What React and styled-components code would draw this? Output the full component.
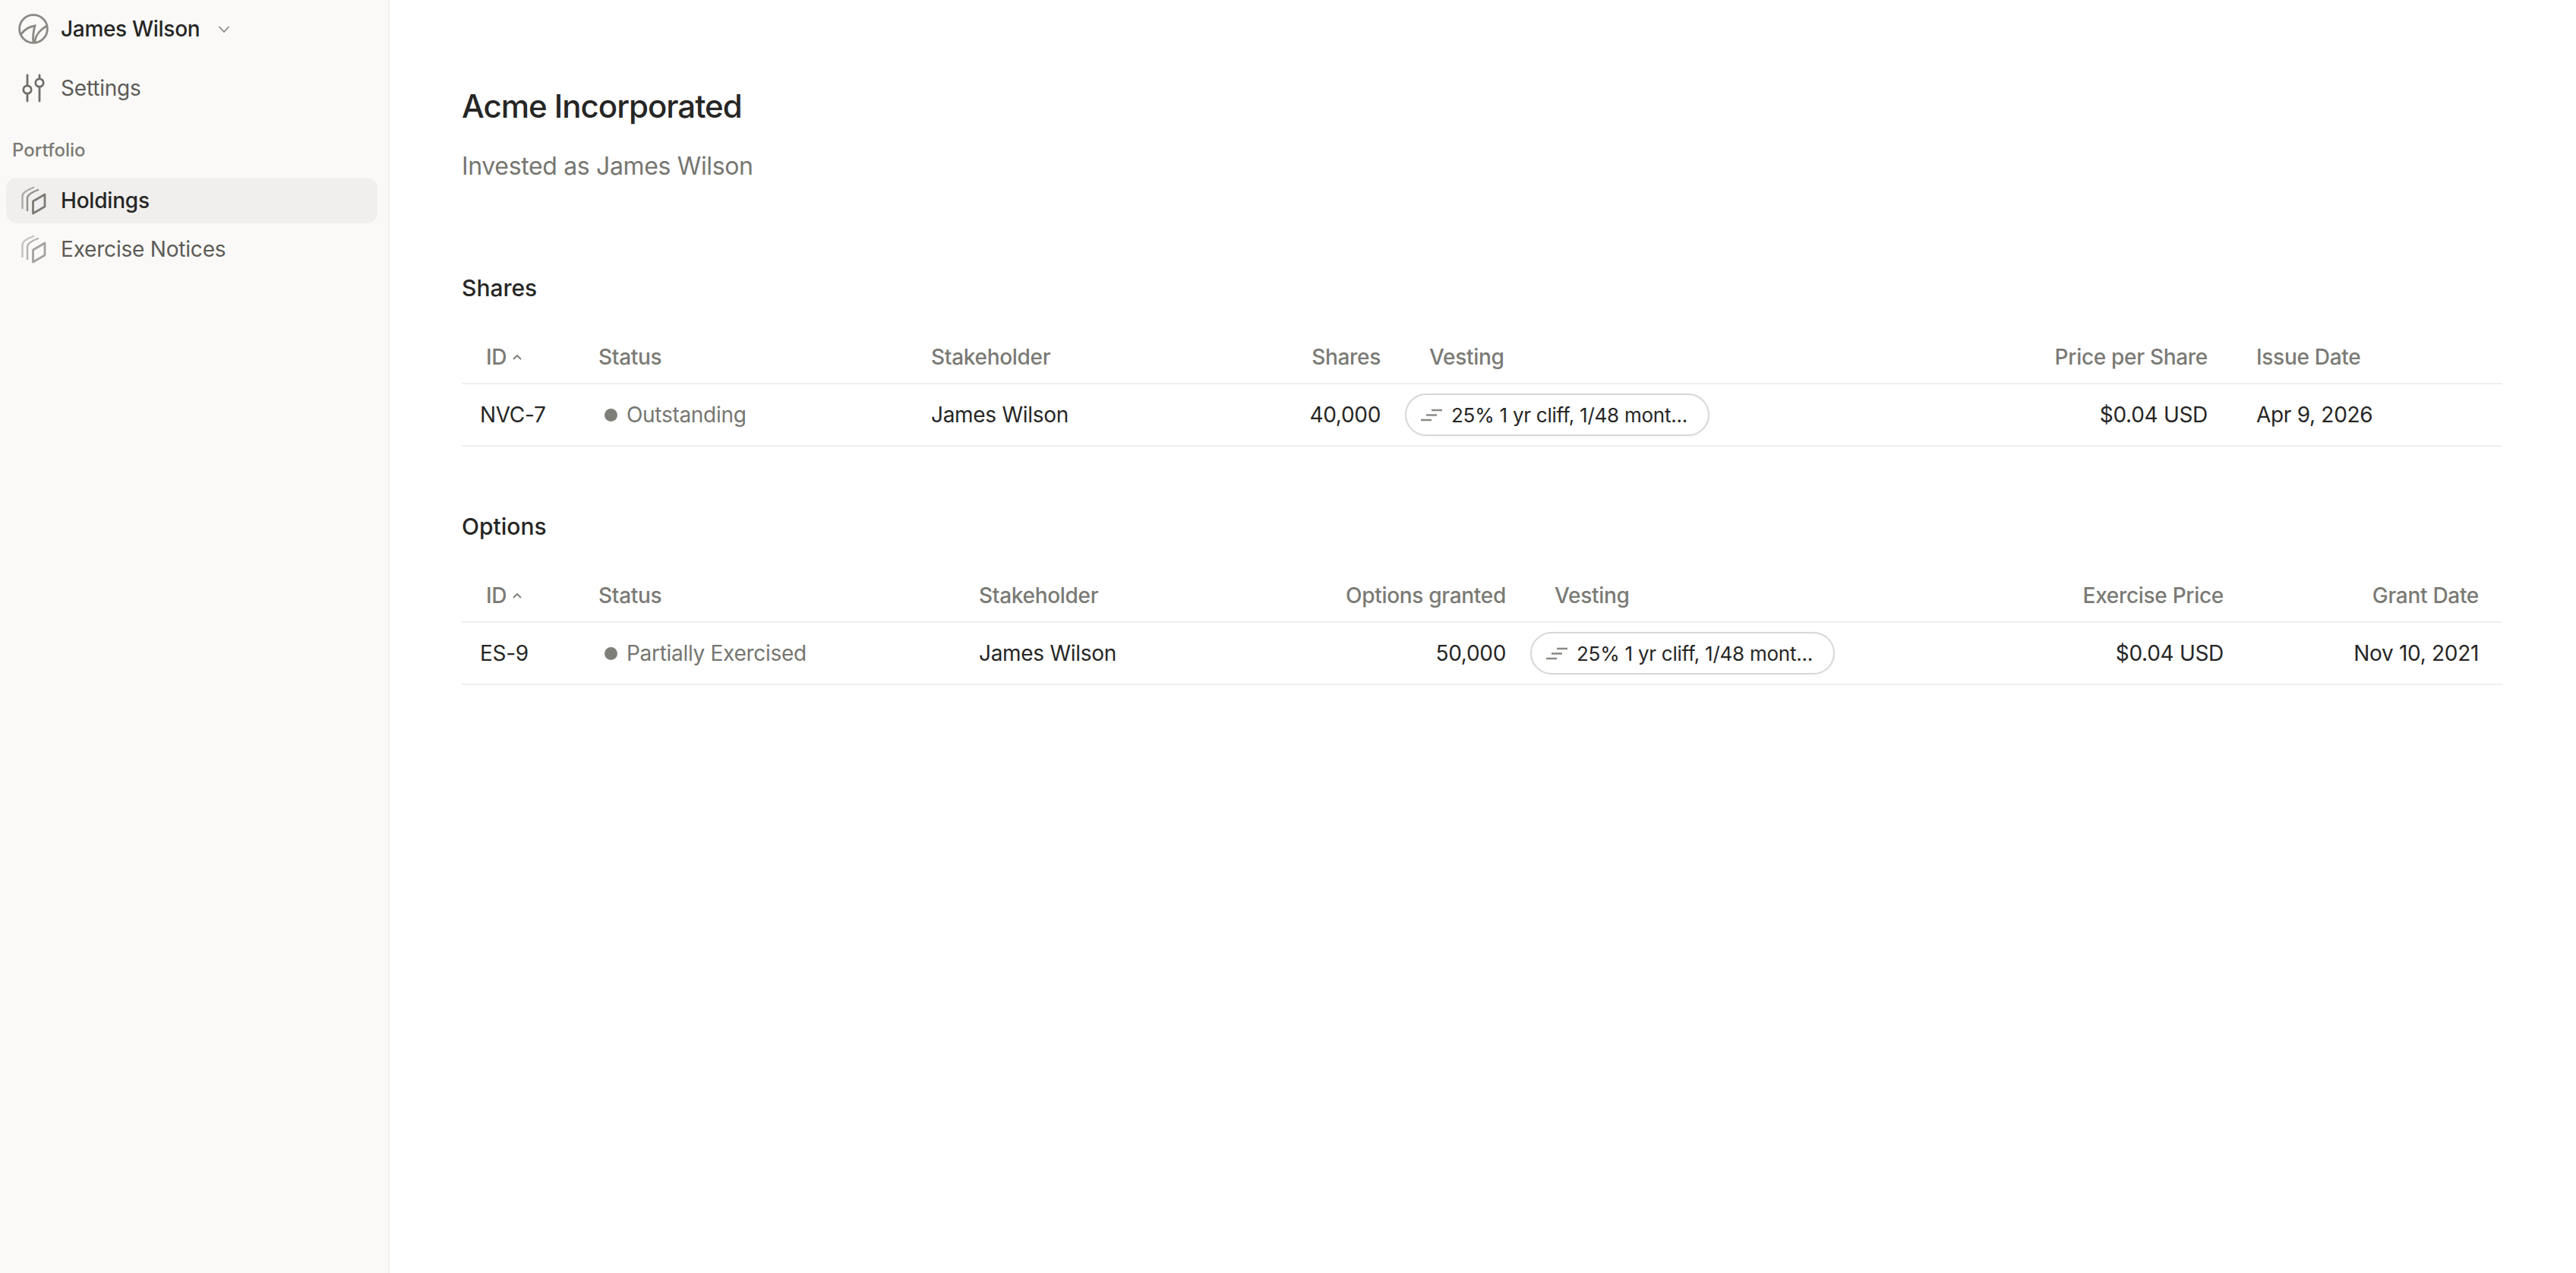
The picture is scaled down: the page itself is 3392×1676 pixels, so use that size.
import styled, { createGlobalStyle } from "styled-components";

const GlobalStyle = createGlobalStyle`
  html, body {
    margin: 0;
    padding: 0;
    background: #fff;
    font-family: Inter, "Liberation Sans", sans-serif;
    color: #262625;
  }
  * { box-sizing: border-box; }
`;

const Page = styled.div`
  display: flex;
  height: 100vh;
  overflow: hidden;
`;
const Sidebar = styled.aside`
  width: 513px;
  flex: none;
  background: #faf9f7;
  border-right: 2px solid #f0efed;
  padding: 0 14px 0 8px;
  display: flex;
  flex-direction: column;
`;
const UserRow = styled.div`
  height: 76px;
  margin-bottom: 10px;
  display: flex;
  align-items: center;
  padding-left: 16px;
  font-size: 28px;
  font-weight: 500;
  letter-spacing: -0.3px;
  color: #262625;
`;
const UserIcon = styled.svg`
  width: 40px;
  height: 40px;
  margin-right: 16px;
  flex: none;
`;
const Chevron = styled.svg`
  width: 16px;
  height: 11px;
  margin-left: 24px;
`;
const NavItem = styled.div`
  height: 60px;
  display: flex;
  align-items: center;
  padding-left: 20px;
  border-radius: 14px;
  font-size: 28px;
  letter-spacing: -0.2px;
  font-weight: ${(props) => (props.$active ? 500 : 400)};
  color: ${(props) => (props.$active ? "#262625" : "#5c5b57")};
  background: ${(props) => (props.$active ? "#f0efed" : "transparent")};
  margin-bottom: 4px;
`;
const NavIcon = styled.svg`
  width: 34px;
  height: 38px;
  margin-right: 18px;
  flex: none;
`;
const SectionLabel = styled.div`
  font-size: 24px;
  font-weight: 500;
  color: #7a7a75;
  line-height: 30px;
  padding-left: 8px;
  margin: 33px 0 21px;
`;
const Main = styled.main`
  flex: 1;
  min-width: 0;
  padding: 112px 97px 0 95px;
`;
const Title = styled.h1`
  margin: 0;
  font-size: 42px;
  line-height: 56px;
  font-weight: 500;
  letter-spacing: -1px;
  color: #262625;
`;
const Subtitle = styled.p`
  margin: 31px 0 0;
  font-size: 32px;
  line-height: 40px;
  letter-spacing: -0.35px;
  color: #767671;
`;
const Section = styled.section`
  margin-top: ${(props) => props.$top}px;
`;
const SectionTitle = styled.h2`
  margin: 0 0 36px;
  font-size: 30px;
  line-height: 40px;
  font-weight: 500;
  color: #262625;
`;
const Row = styled.div`
  display: grid;
  grid-template-columns: ${(props) => props.$cols};
  align-items: center;
  height: ${(props) => props.$height}px;
  border-bottom: 2px solid #f0efed;
`;
const Cell = styled.div`
  display: flex;
  align-items: center;
  min-width: 0;
  font-size: 28px;
  letter-spacing: -0.3px;
  white-space: nowrap;
  justify-content: ${(props) => (props.$right ? "flex-end" : "flex-start")};
  padding-left: ${(props) => props.$pl}px;
  padding-right: ${(props) => props.$pr}px;
  color: ${(props) => (props.$muted ? "#767671" : "#262625")};
`;
const HeadCell = styled(Cell)`
  font-weight: 500;
  color: #7a7a75;
`;
const SortIcon = styled.svg`
  width: 14px;
  height: 8px;
  margin-left: 7px;
`;
const Dot = styled.span`
  width: 17px;
  height: 17px;
  border-radius: 50%;
  background: #7f7f7a;
  margin: 0 12px 0 8px;
  flex: none;
`;
const Pill = styled.div`
  width: 401px;
  height: 56px;
  display: flex;
  align-items: center;
  padding: 0 18px;
  border: 2px solid #d8d7d4;
  border-radius: 28px;
  background: #fff;
  box-shadow: 0 2px 4px rgba(0, 0, 0, 0.03);
  font-size: 26px;
  letter-spacing: -0.25px;
  color: #262625;
`;
const PillIcon = styled.svg`
  width: 30px;
  height: 18px;
  margin-right: 11px;
  flex: none;
`;

const LogoIcon = () => (
  <UserIcon viewBox="0 0 40 40" fill="none" stroke="#8b8a85" strokeWidth="2.8">
    <circle cx="20" cy="20" r="18.4" />
    <path d="M3 28C7 22 14 17 22 16C20 23 19 31 20 38" />
    <path d="M22 38C22 29 29 21 38 16" />
  </UserIcon>
);

const SlidersIcon = () => (
  <NavIcon viewBox="0 0 34 38" fill="none" stroke="#6f6e69" strokeWidth="2.8" strokeLinecap="round">
    <path d="M8 2V15M8 27V36M24 2V6M24 18V36" />
    <circle cx="8" cy="21" r="5.200" />
    <circle cx="24" cy="12" r="5.200" />
  </NavIcon>
);

const StackIcon = ({ light }) => (
  <NavIcon viewBox="0 0 34 38" fill="none" strokeWidth="2.4" strokeLinecap="round" strokeLinejoin="round">
    <path d="M1.500 29V13C1.500 9 8 5 16 2" stroke={light ? "#c2c1bd" : "#a9a8a4"} />
    <path d="M8 32V16C8 12 14 8 22 5" stroke={light ? "#b4b3af" : "#908f8a"} />
    <path d="M15.500 20L31 11V27L15.500 36Z" stroke={light ? "#a3a29e" : "#7c7b76"} strokeWidth="2.800" />
  </NavIcon>
);

const VestIcon = () => (
  <PillIcon viewBox="0 0 30 18" fill="none" stroke="#8b8a85" strokeWidth="2.600">
    <path d="M1 16H15M8 9.500H22M15 3H29" />
  </PillIcon>
);

const SortUp = () => (
  <SortIcon viewBox="0 0 14 8" fill="none" stroke="#7a7a75" strokeWidth="1.800">
    <path d="M2 7L7 2L12 7" />
  </SortIcon>
);

const shareCols = [
  { label: "ID", width: 164, pl: 32, cellPl: 24, sort: true },
  { label: "Status", width: 438, pl: 16 },
  { label: "Stakeholder", width: 400, pl: 16 },
  { label: "Shares", width: 224, right: true, pr: 16 },
  { label: "Vesting", width: 666, pl: 48, cellPl: 16 },
  { label: "Price per Share", width: 423, right: true, pr: 16 },
  { label: "Issue Date", width: 372, pl: 48 },
];

const optionCols = [
  { label: "ID", width: 164, pl: 32, cellPl: 24, sort: true },
  { label: "Status", width: 501, pl: 16 },
  { label: "Stakeholder", width: 427, pl: 16 },
  { label: "Options granted", width: 299, right: true, pr: 16 },
  { label: "Vesting", width: 501, pl: 48, cellPl: 16 },
  { label: "Exercise Price", width: 444, right: true, pr: 16 },
  { label: "Grant Date", width: 351, right: true, pr: 31 },
];

const Holding = ({ title, top, cols, row }) => {
  const template = cols.map((c) => `${c.width}px`).join(" ");
  return (
    <Section $top={top}>
      <SectionTitle>{title}</SectionTitle>
      <Row $cols={template} $height={71}>
        {cols.map((c) => (
          <HeadCell key={c.label} $right={c.right} $pl={c.pl || 0} $pr={c.pr || 0}>
            {c.label}
            {c.sort && <SortUp />}
          </HeadCell>
        ))}
      </Row>
      <Row $cols={template} $height={82}>
        <Cell $pl={cols[0].cellPl}>{row.id}</Cell>
        <Cell $pl={cols[1].pl} $muted>
          <Dot />
          {row.status}
        </Cell>
        <Cell $pl={cols[2].pl}>{row.holder}</Cell>
        <Cell $right $pr={cols[3].pr}>{row.amount}</Cell>
        <Cell $pl={cols[4].cellPl}>
          <Pill>
            <VestIcon />
            25% 1 yr cliff, 1/48 mont...
          </Pill>
        </Cell>
        <Cell $right $pr={cols[5].pr}>{row.price}</Cell>
        <Cell $right={cols[6].right} $pl={cols[6].pl || 0} $pr={cols[6].pr || 0}>{row.date}</Cell>
      </Row>
    </Section>
  );
};

export default function App() {
  return (
    <Page>
      <GlobalStyle />
      <Sidebar>
        <UserRow>
          <LogoIcon />
          James Wilson
          <Chevron viewBox="0 0 16 11" fill="none" stroke="#8b8a85" strokeWidth="1.800">
            <path d="M1.500 2L8 9L14.500 2" />
          </Chevron>
        </UserRow>
        <NavItem>
          <SlidersIcon />
          Settings
        </NavItem>
        <SectionLabel>Portfolio</SectionLabel>
        <NavItem $active>
          <StackIcon />
          Holdings
        </NavItem>
        <NavItem>
          <StackIcon light />
          Exercise Notices
        </NavItem>
      </Sidebar>
      <Main>
        <Title>Acme Incorporated</Title>
        <Subtitle>Invested as James Wilson</Subtitle>
        <Holding
          title="Shares"
          top={120}
          cols={shareCols}
          row={{ id: "NVC-7", status: "Outstanding", holder: "James Wilson", amount: "40,000", price: "$0.04 USD", date: "Apr 9, 2026" }}
        />
        <Holding
          title="Options"
          top={85}
          cols={optionCols}
          row={{ id: "ES-9", status: "Partially Exercised", holder: "James Wilson", amount: "50,000", price: "$0.04 USD", date: "Nov 10, 2021" }}
        />
      </Main>
    </Page>
  );
}
